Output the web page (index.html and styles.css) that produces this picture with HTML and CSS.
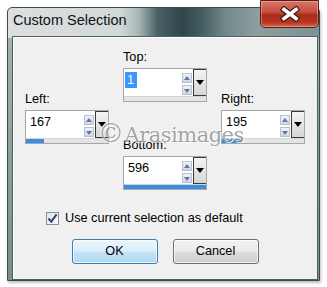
FILE: index.html
```html
<!DOCTYPE html>
<html>
<head>
<meta charset="utf-8">
<link rel="stylesheet" href="styles.css">
</head>
<body>
<div class="window">
  <div class="titlebar">
    <span class="title">Custom Selection</span>
    <div class="close">
      <svg width="20" height="16" viewBox="0 0 20 16">
        <path d="M4 3.5 L16 12.5 M16 3.5 L4 12.5" stroke="#4a1610" stroke-width="6" stroke-linecap="square" fill="none"/>
        <path d="M4 3.5 L16 12.5 M16 3.5 L4 12.5" stroke="#ffffff" stroke-width="3.6" stroke-linecap="square" fill="none"/>
      </svg>
    </div>
  </div>
  <div class="client">
    <div class="fields">
      <div class="field f-top">
        <div class="lbl">Top:</div>
        <div class="sc">
          <div class="sc-row">
            <div class="sc-field"><span class="sc-val"><span class="sel">1</span></span>
              <div class="spin"><span class="sb up"></span><span class="sb down"></span></div>
            </div>
            <div class="sc-drop"><span class="tri"></span></div>
          </div>
          <div class="sc-track"><div class="sc-fill" style="width:0px"></div></div>
        </div>
      </div>
      <div class="field f-left">
        <div class="lbl">Left:</div>
        <div class="sc">
          <div class="sc-row">
            <div class="sc-field"><span class="sc-val">167</span>
              <div class="spin"><span class="sb up"></span><span class="sb down"></span></div>
            </div>
            <div class="sc-drop"><span class="tri"></span></div>
          </div>
          <div class="sc-track"><div class="sc-fill" style="width:18px"></div></div>
        </div>
      </div>
      <div class="field f-right">
        <div class="lbl">Right:</div>
        <div class="sc">
          <div class="sc-row">
            <div class="sc-field"><span class="sc-val">195</span>
              <div class="spin"><span class="sb up"></span><span class="sb down"></span></div>
            </div>
            <div class="sc-drop"><span class="tri"></span></div>
          </div>
          <div class="sc-track"><div class="sc-fill" style="width:20px"></div></div>
        </div>
      </div>
      <div class="field f-bottom">
        <div class="lbl">Bottom:</div>
        <div class="sc">
          <div class="sc-row">
            <div class="sc-field"><span class="sc-val">596</span>
              <div class="spin"><span class="sb up"></span><span class="sb down"></span></div>
            </div>
            <div class="sc-drop"><span class="tri"></span></div>
          </div>
          <div class="sc-track"><div class="sc-fill" style="width:82px"></div></div>
        </div>
      </div>
    </div>
    <div class="check">
      <span class="box">
        <svg width="11" height="11" viewBox="0 0 11 11"><path d="M1.5 5.5 L4.3 8.6 L9.6 1.4" stroke="#2b3f7c" stroke-width="2" fill="none"/></svg>
      </span>
      <span class="check-text">Use current selection as default</span>
    </div>
    <div class="buttons">
      <div class="btn btn-default">OK</div>
      <div class="btn">Cancel</div>
    </div>
    <div class="watermark"><span class="wm-c">©</span>Arasimages</div>
  </div>
</div>
</body>
</html>
```
FILE: styles.css
```css
html, body {
  margin: 0;
  padding: 0;
  background: #ffffff;
}
body {
  width: 327px;
  height: 287px;
  overflow: hidden;
  font-family: "Liberation Sans", Arial, sans-serif;
  color: #000;
}
.window {
  position: relative;
  margin: 7px 0 0 7px;
  width: 313px;
  height: 274px;
  box-sizing: border-box;
  border: 1px solid #3c4c4c;
  border-radius: 5px 5px 0 0;
  background:
    linear-gradient(90deg, #dcdfdf 0%, #d3d8d8 36%, #a9b6b6 42%, #4a6267 48%, #2f464b 56%, #425c60 62%, #73888a 70%, #8e9e9f 80%, #7d9293 100%) top left / 100% 30px no-repeat,
    linear-gradient(180deg, #aab4b2 0%, #8fa19c 50%, #7a8e88 100%);
  box-shadow: 1px 2px 3px rgba(0,0,0,0.25);
}
.titlebar {
  height: 28px;
  box-sizing: border-box;
  padding: 2px 0 0 5px;
}
.title {
  font-family: "Liberation Sans", Arial, sans-serif;
  font-size: 14.5px;
  line-height: 20px;
  color: #111;
}
.close {
  position: absolute;
  top: -8px;
  right: 0;
  width: 59px;
  height: 28px;
  box-sizing: border-box;
  border: 1px solid #5c1c14;
  border-radius: 0 0 5px 5px;
  background: linear-gradient(180deg, #d77565 0%, #c75243 40%, #aa2a1b 55%, #b53623 82%, #d76a52 100%);
  box-shadow: inset 0 0 0 1px rgba(255,255,255,0.3);
  display: flex;
  align-items: center;
  justify-content: center;
}
.client {
  position: relative;
  margin: 0 1px 0 4px;
  height: 244px;
  box-sizing: border-box;
  border: 1px solid #4f6060;
  background: #f0f0f0;
  box-shadow: inset 1px 1px 0 #ffffff;
}
.fields {
  display: grid;
  grid-template-columns: 84px 84px 84px;
  grid-template-rows: 42px 46px auto;
  column-gap: 14px;
  padding: 12px 0 0 12px;
}
.f-top { grid-column: 2; grid-row: 1 / span 2; align-self: start; }
.f-left { grid-column: 1; grid-row: 2 / span 2; align-self: start; }
.f-right { grid-column: 3; grid-row: 2 / span 2; align-self: start; }
.f-bottom { grid-column: 2; grid-row: 3; align-self: start; }
.lbl {
  font-size: 12.7px;
  line-height: 16px;
  height: 16px;
  margin-bottom: 3px;
}
.sc {
  width: 84px;
  height: 34px;
  box-sizing: border-box;
  border: 1px solid #a7a7a7;
  background: #fff;
  display: flex;
  flex-direction: column;
}
.sc-row {
  display: flex;
  height: 27px;
}
.sc-field {
  flex: 1;
  display: flex;
  justify-content: space-between;
}
.sc-val {
  font-size: 12.7px;
  line-height: 16px;
  padding: 3px 0 0 4px;
}
.sel {
  background: #3399ff;
  color: #fff;
  display: inline-block;
  padding: 0 3px 0 2px;
  margin-left: -3px;
}
.spin {
  display: flex;
  flex-direction: column;
  gap: 2px;
  margin: 4px 1px 0 0;
}
.sb {
  position: relative;
  width: 10px;
  height: 10px;
  box-sizing: border-box;
  border: 1px solid #b9c0d0;
  background: linear-gradient(180deg, #f1f3f8, #d0d7e6);
}
.sb::after {
  content: "";
  position: absolute;
  left: 1px;
  top: 2px;
  border-left: 3.5px solid transparent;
  border-right: 3.5px solid transparent;
}
.sb.up::after { border-bottom: 4px solid #6673b0; }
.sb.down::after { border-top: 4px solid #6673b0; top: 3px; }
.sc-drop {
  width: 13px;
  box-sizing: border-box;
  border: 1px solid #3a3a3a;
  border-right-width: 0;
  background: linear-gradient(180deg, #f4f4f4, #d6d6d6);
  display: flex;
  justify-content: center;
  align-items: center;
}
.tri {
  width: 0;
  height: 0;
  border-left: 4.5px solid transparent;
  border-right: 4.5px solid transparent;
  border-top: 5px solid #000;
}
.sc-track {
  flex: 1;
  background: #e4e4e4;
  border-top: 1px solid #d4d4d4;
}
.sc-fill {
  height: 100%;
  background: #3a8ee2;
}
.check {
  display: flex;
  align-items: center;
  margin: 20px 0 0 33px;
  height: 16px;
}
.box {
  width: 13px;
  height: 13px;
  box-sizing: border-box;
  border: 1px solid #8f8f8f;
  background: linear-gradient(135deg, #e3e3e3, #fbfbfb);
  display: flex;
  align-items: center;
  justify-content: center;
  margin-right: 6px;
}
.check-text {
  font-size: 12.7px;
  line-height: 16px;
}
.buttons {
  display: flex;
  justify-content: center;
  gap: 15px;
  margin-top: 13px;
}
.btn {
  width: 86px;
  height: 25px;
  box-sizing: border-box;
  border: 1px solid #707070;
  border-radius: 3px;
  background: linear-gradient(180deg, #f2f2f2 0%, #ebebeb 48%, #dddddd 52%, #cfcfcf 100%);
  box-shadow: inset 0 0 0 1px rgba(255,255,255,0.7);
  font-size: 12.7px;
  line-height: 23px;
  text-align: center;
}
.btn-default {
  border-color: #3c7fb1;
  background: linear-gradient(180deg, #eaf6fd 0%, #dbeefa 48%, #c4e3f7 52%, #b0d7f1 100%);
}
.watermark {
  position: absolute;
  left: 85px;
  top: 82px;
  font-family: "DejaVu Serif", serif;
  font-size: 21px;
  line-height: 28px;
  letter-spacing: -0.5px;
  color: rgba(125,125,125,0.7);
  text-shadow: 1px 1px 0 rgba(255,255,255,0.8), -1px -1px 0 rgba(255,255,255,0.6);
  pointer-events: none;
  white-space: nowrap;
}
.wm-c {
  font-size: 26px;
  margin-right: 1px;
}
```
